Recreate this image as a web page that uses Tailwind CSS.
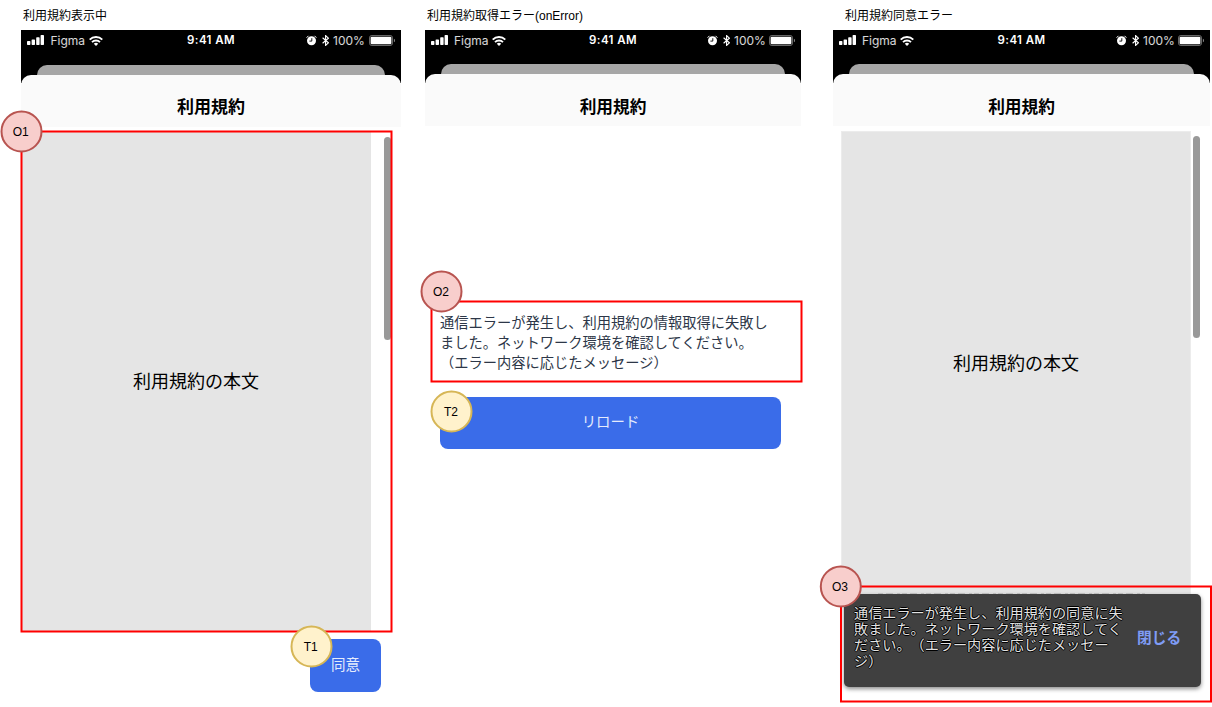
<!DOCTYPE html>
<html lang="ja">
<head>
<meta charset="utf-8">
<title>利用規約</title>
<script src="https://cdn.jsdelivr.net/npm/@tailwindcss/browser@4"></script>
</head>
<body class="bg-white">
<svg class="hidden">
  <symbol id="signal" viewBox="0 0 17 11"><g fill="#fff"><rect x="0" y="6" width="3.4" height="4" rx=".7"/><rect x="4.6" y="4.4" width="3.4" height="5.6" rx=".7"/><rect x="9.2" y="2.2" width="3.4" height="7.8" rx=".7"/><rect x="13.6" y="0" width="3.4" height="10" rx=".7"/></g></symbol>
  <symbol id="wifi" viewBox="0 0 14 10"><g fill="none" stroke="#fff" stroke-width="1.9"><path d="M.7 3.6a9 9 0 0 1 12.6 0"/><path d="M3 6.1a5.7 5.7 0 0 1 8 0"/></g><path fill="#fff" d="M4.8 7.7a3.2 3.2 0 0 1 4.4 0L7 10z"/></symbol>
  <symbol id="alarm" viewBox="0 0 11 11"><circle cx="5.5" cy="5.7" r="4.5" fill="#fff"/><path d="M.9 2.4 2.2 1.1M10.1 2.4 8.8 1.1" stroke="#fff" stroke-width="1" stroke-linecap="round"/><path d="M5.8 3.2v2.9H3.4" fill="none" stroke="#000" stroke-width=".9"/></symbol>
  <symbol id="bt" viewBox="0 0 7 11"><path d="M.6 2.8 6.4 7.8 3.6 10.4V.6l2.8 2.6L.6 8.2" fill="none" stroke="#fff" stroke-width="1.15"/></symbol>
  <symbol id="battery" viewBox="0 0 26 11"><rect x=".5" y=".5" width="23" height="10" rx="2.2" fill="none" stroke="#fff" stroke-opacity=".4"/><rect x="1.6" y="1.7" width="20.8" height="7.6" rx="1" fill="#fff"/><path d="M24.9 3.8v3.4a1.8 1.8 0 0 0 0-3.4" fill="#fff" fill-opacity=".5"/></symbol>
</svg>
<main class="relative flex h-[707px] w-[1212px] overflow-hidden bg-white pl-[21px] font-['Liberation_Sans','Noto_Sans_CJK_JP',sans-serif] text-black">

  <section class="flex w-[380px] shrink-0 flex-col">
    <h2 class="flex h-[30px] items-center pl-[2px] pt-[2px] text-[12px] leading-none">利用規約表示中</h2>
    <div class="flex h-[53px] flex-col justify-between bg-black">
      <div class="grid h-[21px] grid-cols-[1fr_auto_1fr] items-center px-[6px] font-['Inter',sans-serif] text-[11.5px] leading-none text-white">
        <div class="flex items-center"><svg class="h-[11px] w-[17px]"><use href="#signal"/></svg><span class="ml-[6.5px] w-[38px] text-[12px] text-white/85">Figma</span><svg class="h-[10px] w-[14px]"><use href="#wifi"/></svg></div>
        <span class="pt-px font-semibold tracking-[0.4px]">9:41 AM</span>
        <div class="flex items-center justify-end"><svg class="h-[11px] w-[11px]"><use href="#alarm"/></svg><svg class="ml-[5px] h-[11px] w-[7px]"><use href="#bt"/></svg><span class="ml-[4px] w-[36px] text-[12px] text-white/85">100%</span><svg class="h-[11px] w-[26px]"><use href="#battery"/></svg></div>
      </div>
      <div class="mx-4 h-[18px] rounded-t-[10px] bg-[#a6a6a6]"></div>
    </div>
    <header class="relative -mt-[8px] flex h-[52px] items-center justify-center rounded-t-[10px] bg-[#fafafa] pt-[14px] text-[17px] font-bold">利用規約</header>
    <div class="mt-[4px] flex h-[500px]">
      <div class="flex w-[350px] items-center justify-center bg-[#e5e5e5] pt-[2px] text-[18px]">利用規約の本文</div>
      <div class="ml-[13px] mt-[6px] h-[203px] w-[7px] rounded-full bg-[#999]"></div>
    </div>
    <button class="ml-[289px] mt-[8px] h-[53px] w-[71px] rounded-[8px] bg-[#3a6ce9] text-[14.5px] text-[#e4ebfc]">同意</button>
  </section>

  <section class="ml-[24px] flex w-[376px] shrink-0 flex-col">
    <h2 class="flex h-[30px] items-center pl-[2px] pt-[2px] text-[12px] leading-none">利用規約取得エラー(onError)</h2>
    <div class="flex h-[53px] flex-col justify-between bg-black">
      <div class="grid h-[21px] grid-cols-[1fr_auto_1fr] items-center px-[6px] font-['Inter',sans-serif] text-[11.5px] leading-none text-white">
        <div class="flex items-center"><svg class="h-[11px] w-[17px]"><use href="#signal"/></svg><span class="ml-[6px] w-[38px] text-[12px] text-white/85">Figma</span><svg class="h-[10px] w-[14px]"><use href="#wifi"/></svg></div>
        <span class="pt-px font-semibold tracking-[0.4px]">9:41 AM</span>
        <div class="flex items-center justify-end"><svg class="h-[11px] w-[11px]"><use href="#alarm"/></svg><svg class="ml-[5px] h-[11px] w-[7px]"><use href="#bt"/></svg><span class="ml-[4px] w-[35px] text-[12px] text-white/85">100%</span><svg class="h-[11px] w-[26px]"><use href="#battery"/></svg></div>
      </div>
      <div class="mx-4 h-[19px] rounded-t-[10px] bg-[#a6a6a6]"></div>
    </div>
    <header class="relative -mt-[9px] flex h-[52px] items-center justify-center rounded-t-[10px] bg-[#fafafa] pt-[15px] text-[16.7px] font-bold">利用規約</header>
    <p class="ml-[15px] mt-[187px] w-[350px] text-[14.25px] leading-[20px] text-[#2d3748]">通信エラーが発生し、利用規約の情報取得に失敗し<br>ました。ネットワーク環境を確認してください。<br>（エラー内容に応じたメッセージ）</p>
    <button class="ml-[15px] mt-[24px] h-[52px] w-[341px] rounded-[8px] bg-[#3a6ce9] text-[14.4px] text-[#e4ebfc]">リロード</button>
  </section>

  <section class="ml-[32px] flex w-[377px] shrink-0 flex-col">
    <h2 class="flex h-[30px] items-center pl-[12px] pt-[2px] text-[12px] leading-none">利用規約同意エラー</h2>
    <div class="flex h-[53px] flex-col justify-between bg-black">
      <div class="grid h-[21px] grid-cols-[1fr_auto_1fr] items-center px-[6px] font-['Inter',sans-serif] text-[11.5px] leading-none text-white">
        <div class="flex items-center"><svg class="h-[11px] w-[17px]"><use href="#signal"/></svg><span class="ml-[6px] w-[38px] text-[12px] text-white/85">Figma</span><svg class="h-[10px] w-[14px]"><use href="#wifi"/></svg></div>
        <span class="pt-px font-semibold tracking-[0.4px]">9:41 AM</span>
        <div class="flex items-center justify-end"><svg class="h-[11px] w-[11px]"><use href="#alarm"/></svg><svg class="ml-[5px] h-[11px] w-[7px]"><use href="#bt"/></svg><span class="ml-[4px] w-[35px] text-[12px] text-white/85">100%</span><svg class="h-[11px] w-[26px]"><use href="#battery"/></svg></div>
      </div>
      <div class="mx-4 h-[19px] rounded-t-[10px] bg-[#a6a6a6]"></div>
    </div>
    <header class="relative -mt-[9px] flex h-[52px] items-center justify-center rounded-t-[10px] bg-[#fafafa] pt-[15px] text-[16.7px] font-bold">利用規約</header>
    <div class="ml-[8px] mt-[5px] flex h-[463px]">
      <div class="flex w-[350px] items-center justify-center border border-b-0 border-[#ececec] bg-[#e5e5e5] pt-[3px] text-[18px]">利用規約の本文</div>
      <div class="ml-[2px] mt-[5px] h-[202px] w-[7px] rounded-full bg-[#999]"></div>
    </div>
    <div class="ml-[11px] flex h-[93px] w-[357px] rounded-[5px] bg-[#404040] shadow-[0_2px_4px_rgba(0,0,0,0.45)]">
      <p class="ml-[10px] mt-[11px] w-[280px] text-[14.15px] leading-[16px] text-[#e2e2e2] [text-shadow:1px_0_#000,-1px_0_#000,0_1px_#000,0_-1px_#000] [text-spacing-trim:space-all]">通信エラーが発生し、利用規約の同意に失<br>敗ました。ネットワーク環境を確認してく<br>ださい。（エラー内容に応じたメッセー<br>ジ）</p>
      <span class="ml-[3px] mt-[33px] text-[14.7px] font-bold leading-[22px] text-[#7f9cf5]">閉じる</span>
    </div>
  </section>

  <!-- annotation frames and markers -->
  <svg class="absolute left-0 top-0 h-[707px] w-[1212px]" viewBox="0 0 1212 707">
    <path d="M878 594H1145" stroke="#404040" stroke-opacity=".35" stroke-dasharray="5 3 7 4 3 2"/>
    <g fill="none" stroke="#f00" stroke-width="2">
      <rect x="21.5" y="131.5" width="370" height="500"/>
      <rect x="431.5" y="301.5" width="370" height="80"/>
      <rect x="841" y="586.5" width="370" height="115"/>
    </g>
    <g fill="#f8cecc" stroke="#b85450" stroke-width="2">
      <circle cx="21.5" cy="131.5" r="20"/><circle cx="441.5" cy="291.5" r="20"/><circle cx="840.8" cy="586.5" r="20"/>
    </g>
    <g fill="#fff2cc" stroke="#d6b656" stroke-width="2">
      <circle cx="311.5" cy="646.5" r="20"/><circle cx="451.5" cy="411.5" r="20"/>
    </g>
    <g class="text-[12px]" text-anchor="middle" fill="#000">
      <text x="20.8" y="136">O1</text><text x="441" y="296">O2</text><text x="840" y="591">O3</text><text x="310.8" y="651">T1</text><text x="451" y="416">T2</text>
    </g>
  </svg>
</main>
</body>
</html>
